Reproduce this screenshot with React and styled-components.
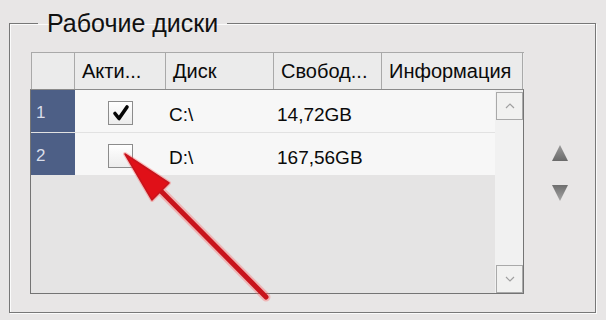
import React from "react";
import styled, { createGlobalStyle } from "styled-components";

const Global = createGlobalStyle`
  html, body { margin: 0; padding: 0; }
  body {
    background: #e8e6e6;
    font-family: "Liberation Sans", Arial, sans-serif;
    color: #0a0a0a;
  }
`;

const Page = styled.div`
  position: relative;
  width: 606px;
  height: 320px;
  padding: 8px 10px 0 9px;
  box-sizing: border-box;
  overflow: hidden;
`;

const Group = styled.fieldset`
  margin: 0;
  box-sizing: border-box;
  height: 305px;
  border: 1px solid #777;
  box-shadow: 1px 1px 0 #fbfbfb, inset 1px 1px 0 #fbfbfb;
  padding: 14px 0 0 20px;
  display: flex;
  align-items: flex-start;
`;

const Legend = styled.legend`
  margin-left: 8px;
  padding: 0 9px 0 9px;
  font-size: 25px;
  line-height: 30px;
  color: #111;
`;

const Table = styled.div`
  width: 494px;
  height: 242px;
  display: flex;
  flex-direction: column;
`;

const Header = styled.div`
  display: grid;
  grid-template-columns: 43px 91px 108px 108px 141px;
  height: 37px;
  margin-left: 1px;
  border-top: 1px solid #a9a9a9;
  border-left: 1px solid #a9a9a9;
  box-sizing: border-box;
  background: #ebebeb;
`;

const HeadCell = styled.div`
  border-right: 1px solid #a9a9a9;
  display: flex;
  align-items: center;
  padding-left: 7px;
  font-size: 20px;
  white-space: nowrap;
  overflow: hidden;
`;

const Body = styled.div`
  flex: 1;
  display: flex;
  border: 1px solid #747474;
  border-top-color: #8a8a8a;
  background: #e5e4e4;
`;

const Rows = styled.div`
  flex: 1;
  display: flex;
  flex-direction: column;
`;

const Row = styled.div`
  display: grid;
  grid-template-columns: 44px 91px 108px 1fr;
  height: ${(p) => p.$h}px;
  background: #f7f7f7;
  border-bottom: ${(p) => (p.$sep ? "1px solid #e2e2e2" : "none")};
  box-sizing: border-box;
`;

const NumCell = styled.div`
  background: #4d5f86;
  color: #d9deea;
  font-size: 17px;
  display: flex;
  align-items: center;
  padding: 4px 0 0 5px;
`;

const CheckCell = styled.div`
  display: flex;
  align-items: center;
  justify-content: center;
  padding-top: 4px;
`;

const Box = styled.div`
  width: 23px;
  height: 22px;
  border: 1px solid #8c8c8c;
  background: linear-gradient(#ffffff, #ececec);
  display: flex;
  align-items: center;
  justify-content: center;
`;

const TextCell = styled.div`
  display: flex;
  align-items: center;
  padding: 7px 0 0 3px;
  font-size: 19px;
  white-space: nowrap;
`;

const Scroll = styled.div`
  width: 28px;
  background: #f1f1f1;
  display: flex;
  flex-direction: column;
  justify-content: space-between;
  padding-top: 2px;
  box-sizing: border-box;
`;

const ScrollBtn = styled.div`
  width: 27px;
  height: 28px;
  margin-left: 1px;
  box-sizing: border-box;
  border: 1px solid #a9a9a9;
  background: #f1f1f0;
  display: flex;
  align-items: center;
  justify-content: center;
`;

const Side = styled.div`
  flex: 1;
  display: flex;
  flex-direction: column;
  align-items: center;
  gap: 22px;
  padding-top: 92px;
`;

const Overlay = styled.svg`
  position: absolute;
  left: 0;
  top: 0;
  pointer-events: none;
`;

const Check = () => (
  <svg width="18" height="18" viewBox="0 0 18 18">
    <path
      d="M3 9.5 L7 14.5 L15 3"
      fill="none"
      stroke="#050505"
      strokeWidth="3.6"
      strokeLinecap="round"
      strokeLinejoin="round"
    />
  </svg>
);

const Caret = ({ down }) => (
  <svg width="12" height="8" viewBox="0 0 12 8">
    <path
      d={down ? "M2 2 L6 6 L10 2" : "M2 6 L6 2 L10 6"}
      fill="none"
      stroke="#a0a0a0"
      strokeWidth="1.2"
    />
  </svg>
);

const Tri = ({ down }) => (
  <svg width="18" height="18" viewBox="0 0 18 18">
    <defs>
      <linearGradient id={down ? "gd" : "gu"} x1="0" y1="0" x2="0" y2="1">
        <stop offset="0" stopColor={down ? "#6e6e6e" : "#9a9a9a"} />
        <stop offset="1" stopColor={down ? "#a5a5a5" : "#6a6a6a"} />
      </linearGradient>
    </defs>
    <polygon
      points={down ? "1,1 17,1 9,17" : "9,1 17,17 1,17"}
      fill={`url(#${down ? "gd" : "gu"})`}
    />
  </svg>
);

export default function App() {
  return (
    <>
      <Global />
      <Page>
        <Group>
          <Legend>Рабочие диски</Legend>
          <Table>
            <Header>
              <HeadCell />
              <HeadCell>Акти...</HeadCell>
              <HeadCell>Диск</HeadCell>
              <HeadCell>Свобод...</HeadCell>
              <HeadCell>Информация</HeadCell>
            </Header>
            <Body>
              <Rows>
                <Row $h={43} $sep>
                  <NumCell>1</NumCell>
                  <CheckCell>
                    <Box>
                      <Check />
                    </Box>
                  </CheckCell>
                  <TextCell>C:\</TextCell>
                  <TextCell>14,72GB</TextCell>
                </Row>
                <Row $h={42}>
                  <NumCell>2</NumCell>
                  <CheckCell>
                    <Box />
                  </CheckCell>
                  <TextCell>D:\</TextCell>
                  <TextCell>167,56GB</TextCell>
                </Row>
              </Rows>
              <Scroll>
                <ScrollBtn>
                  <Caret />
                </ScrollBtn>
                <ScrollBtn>
                  <Caret down />
                </ScrollBtn>
              </Scroll>
            </Body>
          </Table>
          <Side>
            <Tri />
            <Tri down />
          </Side>
        </Group>
        <Overlay width="606" height="320" viewBox="0 0 606 320">
          <g opacity="0.35">
            <line x1="266" y1="297" x2="150" y2="180" stroke="#ff6060" strokeWidth="9" strokeLinecap="round" />
            <polygon points="125,154 169,183 152,200" fill="#ff6060" stroke="#ff6060" strokeWidth="4" strokeLinejoin="round" />
          </g>
          <line x1="266" y1="297" x2="150" y2="180" stroke="#c8141c" strokeWidth="5" strokeLinecap="round" />
          <polygon points="125,154 169,183 152,200" fill="#e01018" stroke="#c8141c" strokeWidth="1.5" strokeLinejoin="round" />
        </Overlay>
      </Page>
    </>
  );
}
